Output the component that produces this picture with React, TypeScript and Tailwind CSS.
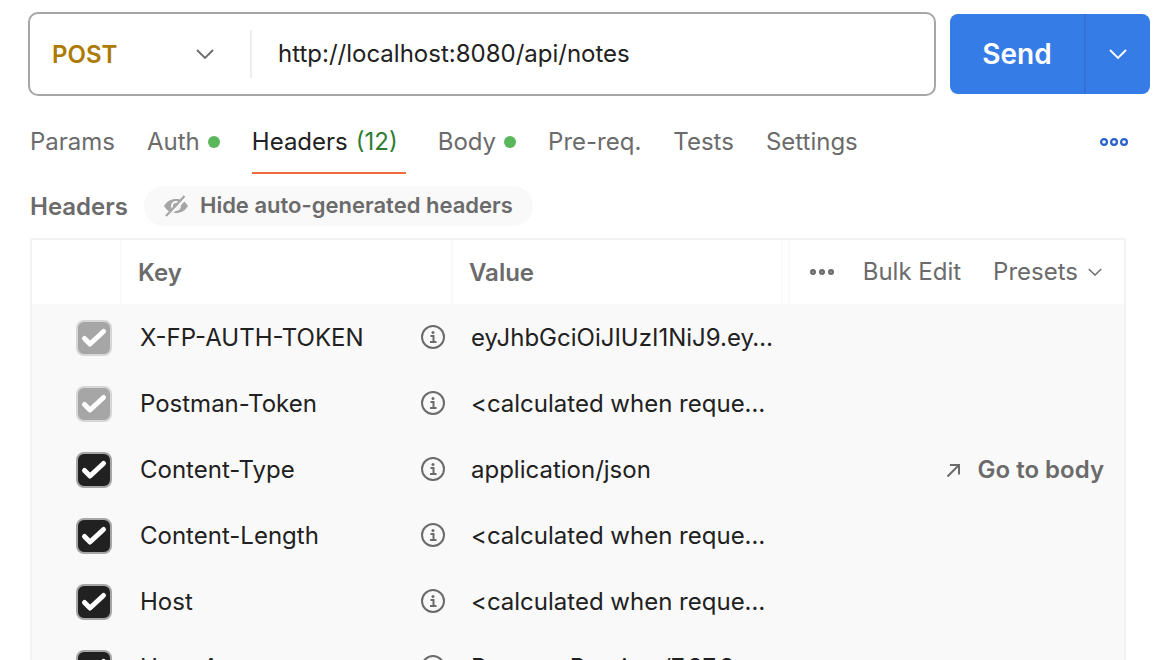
import React, { useState } from 'react';

interface HeaderRow {
  name: string;
  value: string;
  locked?: boolean;
  action?: string;
}

interface TabItem {
  label: string;
  dot?: boolean;
  count?: number;
}

const tabs: TabItem[] = [
  { label: 'Params' },
  { label: 'Auth', dot: true },
  { label: 'Headers', count: 12 },
  { label: 'Body', dot: true },
  { label: 'Pre-req.' },
  { label: 'Tests' },
  { label: 'Settings' }
];

const rows: HeaderRow[] = [
  { name: 'X-FP-AUTH-TOKEN', value: 'eyJhbGciOiJIUzI1NiJ9.ey…', locked: true },
  { name: 'Postman-Token', value: '<calculated when reque…', locked: true },
  { name: 'Content-Type', value: 'application/json', action: 'Go to body' },
  { name: 'Content-Length', value: '<calculated when reque…' },
  { name: 'Host', value: '<calculated when reque…' },
  { name: 'User-Agent', value: 'PostmanRuntime/7.37.3' }
];

const ChevronIcon: React.FC<{ className: string }> = ({ className }) => (
  <svg className={className} viewBox="0 0 18 10" fill="none" stroke="currentColor" strokeWidth={1.8}>
    <path d="M1 1l8 8 8-8" />
  </svg>
);

const DotsIcon: React.FC<{ className: string }> = ({ className }) => (
  <svg className={className} viewBox="0 0 28 8" fill="none" stroke="currentColor" strokeWidth={2.2}>
    <circle cx="4" cy="4" r="2.9" />
    <circle cx="14" cy="4" r="2.9" />
    <circle cx="24" cy="4" r="2.9" />
  </svg>
);

const SmallDotsIcon: React.FC = () => (
  <svg className="w-6 h-6" viewBox="0 0 24 24" fill="none" stroke="currentColor" strokeWidth={2.4}>
    <circle cx="3" cy="12" r="1.8" />
    <circle cx="12" cy="12" r="1.8" />
    <circle cx="21" cy="12" r="1.8" />
  </svg>
);

const HiddenEyeIcon: React.FC = () => (
  <svg className="w-6 h-6 text-[#a6a6a6]" viewBox="0 0 24 24" fill="none">
    <path
      fill="currentColor"
      fillRule="evenodd"
      d="M0 12C2.500 7.500 7 5 12 5s9.500 2.500 12 7c-2.500 4.500-7 7-12 7S2.500 16.500 0 12zM12 7a5 5 0 1 0 0 10 5 5 0 0 0 0-10zM12 9a3 3 0 1 1 0 6 3 3 0 0 1 0-6z"
    />
    <path stroke="#f9f9f9" strokeWidth={2.5} d="M3.500 23.500L22.500 3.500" />
    <path stroke="currentColor" strokeWidth={2.2} d="M2 22L20.500 2" />
  </svg>
);

const InfoIcon: React.FC = () => (
  <svg className="w-6 h-6 shrink-0 text-[#6b6b6b]" viewBox="0 0 24 24" fill="none" stroke="currentColor" strokeWidth={2}>
    <circle cx="12" cy="12" r="11" />
    <path d="M9.500 11H12.500V17M9 17h6.500" />
    <circle cx="12" cy="7.500" r="1.500" fill="currentColor" stroke="none" />
  </svg>
);

const ArrowIcon: React.FC = () => (
  <svg className="w-4 h-4" viewBox="0 0 16 16" fill="none" stroke="currentColor" strokeWidth={2}>
    <path d="M1.500 14.500L12.500 3.500M4 3h9v9.500" />
  </svg>
);

const RowCheckbox: React.FC<{ row: HeaderRow }> = ({ row }) => (
  <label className="grid w-9 h-9">
    <input
      type="checkbox"
      defaultChecked
      disabled={row.locked}
      aria-label={row.name}
      className="peer col-start-1 row-start-1 w-9 h-9 appearance-none rounded-lg border-2 border-[#a6a6a6] bg-white checked:bg-[#212121] disabled:border-[#d6d6d6] disabled:bg-[#a6a6a6]"
    />
    <svg
      className="pointer-events-none invisible col-start-1 row-start-1 w-9 h-9 text-white peer-checked:visible"
      viewBox="0 0 36 36"
      fill="none"
      stroke="currentColor"
      strokeWidth={5}
      strokeLinecap="round"
      strokeLinejoin="round"
    >
      <path d="M8.500 18.500l5.500 5.500L27.500 11.500" />
    </svg>
  </label>
);

const App: React.FC = () => {
  const [activeTab, setActiveTab] = useState('Headers');
  const [url, setUrl] = useState('http://localhost:8080/api/notes');

  return (
    <main className="h-screen overflow-hidden bg-white pt-3 pl-7 text-2xl text-[#6b6b6b] font-['Inter',sans-serif] [font-optical-sizing:none]">
      {/* Request line */}
      <div className="flex items-center gap-3.5 pr-2">
        <div className="flex h-21 min-w-0 flex-1 items-center rounded-[10px] border-2 border-[#a6a6a6]">
          <div className="grid w-55 items-center">
            <select
              aria-label="Method"
              className="col-start-1 row-start-1 w-full appearance-none pt-0.5 pl-5.5 font-semibold text-[#ad7a03] outline-none"
            >
              <option>POST</option>
            </select>
            <ChevronIcon className="pointer-events-none col-start-1 row-start-1 mr-9 h-2.5 w-4.5 justify-self-end" />
          </div>
          <div className="h-12 w-0.5 bg-[#ededed]" />
          <input
            type="text"
            aria-label="Request URL"
            value={url}
            onChange={(e) => setUrl(e.target.value)}
            className="min-w-0 flex-1 px-6.5 text-[#212121] outline-none"
          />
        </div>
        <div className="flex h-20 w-50 overflow-hidden rounded-lg bg-[#357ce6] text-white">
          <button type="button" className="flex-1 pt-0.5 text-[28px] font-semibold">
            Send
          </button>
          <button
            type="button"
            aria-label="Send options"
            className="flex w-16.5 items-center justify-center border-l-2 border-[#3371d2]"
          >
            <ChevronIcon className="h-2.5 w-4.5" />
          </button>
        </div>
      </div>

      {/* Tabs */}
      <div className="flex items-center justify-between pt-3 pr-7.5 pl-0.5">
        <nav role="tablist" className="flex gap-8">
          {tabs.map((tab) => (
            <button
              key={tab.label}
              type="button"
              role="tab"
              aria-selected={tab.label === activeTab}
              onClick={() => setActiveTab(tab.label)}
              className="flex h-16.5 items-center gap-2 border-b-2 border-transparent pt-1 aria-selected:border-[#f26b3a] aria-selected:text-[#212121]"
            >
              {tab.label}
              {tab.dot && <span className="h-3 w-3 rounded-full bg-[#59b75c]" />}
              {tab.count && <span className="pr-2 text-[#2e7d32]">({tab.count})</span>}
            </button>
          ))}
        </nav>
        <button type="button" aria-label="More" className="pt-0.5 text-[#2a62c9]">
          <DotsIcon className="h-2 w-7" />
        </button>
      </div>

      <section className="pt-3 pr-8 pl-0.5">
        <div className="flex items-center gap-4">
          <h2 className="pt-0.5 font-semibold">Headers</h2>
          <button
            type="button"
            className="flex h-10 items-center gap-3 rounded-full bg-[#f9f9f9] px-5 text-[22px] font-semibold"
          >
            <HiddenEyeIcon />
            Hide auto-generated headers
          </button>
        </div>

        <table className="mt-3 w-full table-fixed border-separate border-spacing-0 border-2 border-[#f2f2f2] text-left">
          <thead>
            <tr className="h-16">
              <th className="w-[90px] border-r-2 border-[#f9f9f9]" />
              <th className="w-[331px] border-r-2 border-[#f9f9f9] pt-0.5 pl-4 font-semibold">Key</th>
              <th className="w-[330px] border-r-2 border-[#f9f9f9] pt-0.5 pl-4 font-semibold">Value</th>
              <th className="w-[7px] border-r-2 border-[#f9f9f9]" />
              <th className="pr-5.5 pl-5 font-normal">
                <div className="flex items-center justify-between">
                  <button type="button" aria-label="Columns">
                    <SmallDotsIcon />
                  </button>
                  <div className="flex gap-8">
                    <button type="button">Bulk Edit</button>
                    <button type="button" className="flex items-center gap-2.5">
                      Presets
                      <ChevronIcon className="h-2 w-3.5" />
                    </button>
                  </div>
                </div>
              </th>
            </tr>
          </thead>
          <tbody className="bg-[#f9f9f9]">
            {rows.map((row) => (
              <tr key={row.name} className="h-16.5">
                <td className="pt-0.5 pl-11">
                  <RowCheckbox row={row} />
                </td>
                <td className="pr-2 pl-4.5 text-[#212121]">
                  <div className="flex items-center justify-between">
                    <span className="pt-0.5">{row.name}</span>
                    <InfoIcon />
                  </div>
                </td>
                <td className="truncate pt-0.5 pl-4.5 text-[#212121]">{row.value}</td>
                <td />
                <td className="pt-0.5 pr-5">
                  {row.action && (
                    <a href="#body" className="flex items-center justify-end gap-4 font-semibold">
                      <ArrowIcon />
                      {row.action}
                    </a>
                  )}
                </td>
              </tr>
            ))}
          </tbody>
        </table>
      </section>
    </main>
  );
};

export default App;
